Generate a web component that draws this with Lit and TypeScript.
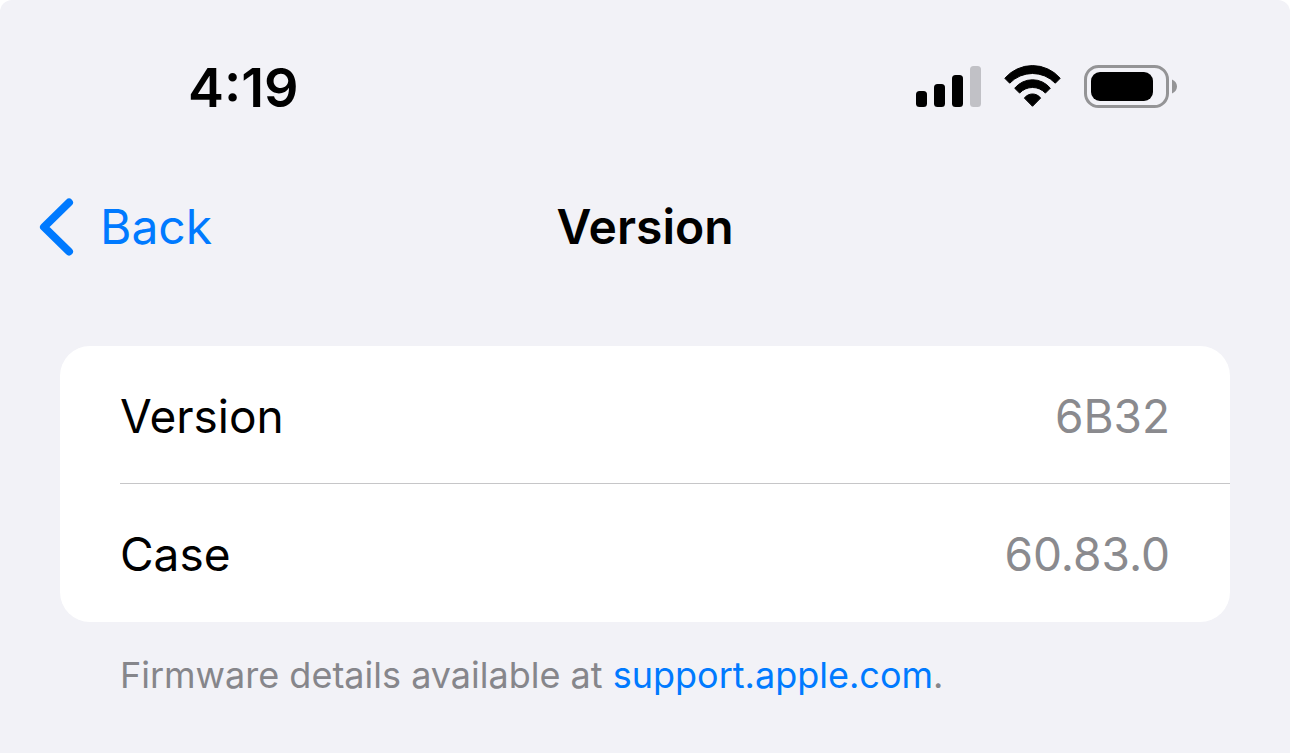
import { LitElement, html, css } from "lit";
import { customElement, state } from "lit/decorators.js";

interface Row {
  label: string;
  value: string;
}

@customElement("status-bar")
class StatusBar extends LitElement {
  static styles = css`
    :host {
      display: flex;
      align-items: center;
      justify-content: space-between;
      padding: 56px 112px 0 188px;
    }
    .time {
      font-size: 54px;
      font-weight: 600;
      line-height: 64px;
    }
    .icons {
      display: flex;
      align-items: center;
      gap: 22px;
      padding-bottom: 2px;
    }
    svg {
      display: block;
    }
  `;

  render() {
    return html`
      <time class="time">4:19</time>
      <div class="icons">
        <svg width="66" height="42" viewBox="0 0 66 42" role="img" aria-label="Cellular signal">
          <rect x="0" y="25" width="11" height="16" rx="3.500" />
          <rect x="18" y="18" width="11" height="23" rx="3.500" />
          <rect x="36" y="9" width="11" height="32" rx="3.500" />
          <rect x="54" y="0" width="11" height="41" rx="3.500" fill="#c1c1c6" />
        </svg>
        <svg width="58" height="44" viewBox="0 0 58 44" role="img" aria-label="Wi-Fi" stroke="#000" stroke-linejoin="round">
          <path d="M.8 13.300A36.500 36.500 0 0 1 56.200 13.300L51.300 18.200A31.600 31.600 0 0 0 5.700 18.200Z" />
          <path d="M10.700 23.200A23 23 0 0 1 46.300 23.200L41.400 28.100A17.600 17.600 0 0 0 15.600 28.100Z" />
          <path d="M20.400 33.100A10 10 0 0 1 36.600 33.100L28.500 41.300Z" />
        </svg>
        <svg width="94" height="44" viewBox="0 0 94 44" role="img" aria-label="Battery">
          <rect x="1.500" y="1.500" width="82" height="40" rx="13" fill="none" stroke="#949496" stroke-width="3" />
          <rect x="7" y="7" width="62" height="29" rx="9" />
          <path d="M88 14.500c3 1.200 5 3.900 5 7s-2 5.800-5 7z" fill="#949496" />
        </svg>
      </div>
    `;
  }
}

@customElement("nav-bar")
class NavBar extends LitElement {
  static styles = css`
    :host {
      display: grid;
      grid-template-columns: 1fr auto 1fr;
      align-items: center;
      padding: 76px 38px 0;
    }
    .back {
      display: flex;
      align-items: center;
      justify-self: start;
      gap: 26px;
      padding: 0;
      border: 0;
      background: none;
      color: #007aff;
      font: inherit;
      font-size: 48px;
      line-height: 62px;
      cursor: pointer;
    }
    .title {
      margin: 0;
      font-size: 48px;
      font-weight: 600;
      line-height: 62px;
    }
  `;

  render() {
    return html`
      <button class="back" type="button">
        <svg width="36" height="60" viewBox="0 0 36 60" aria-hidden="true">
          <path d="M31 5.500L6 30l25 24.500" fill="none" stroke="currentColor" stroke-width="8" stroke-linecap="round" stroke-linejoin="round" />
        </svg>
        Back
      </button>
      <h1 class="title">Version</h1>
    `;
  }
}

@customElement("app-root")
class AppRoot extends LitElement {
  @state() private rows: Row[] = [
    { label: "Version", value: "6B32" },
    { label: "Case", value: "60.83.0" },
  ];

  static styles = css`
    :host {
      display: block;
      background: #fff;
      color: #000;
      font-family: Inter, "Liberation Sans", sans-serif;
    }
    .screen {
      min-height: 100vh;
      box-sizing: border-box;
      border-radius: 12px 12px 0 0;
      background: #f2f2f7;
    }
    .content {
      padding: 88px 60px 48px;
    }
    .card {
      margin: 0;
      padding-left: 60px;
      border-radius: 30px;
      background: #fff;
    }
    .row {
      display: flex;
      align-items: center;
      justify-content: space-between;
      height: 138px;
      box-sizing: border-box;
      padding: 2px 60px 0 0;
      font-size: 46px;
      line-height: 60px;
    }
    .row:not(:last-child) {
      border-bottom: 1px solid #c6c6c8;
    }
    .value {
      margin: 0;
      color: #8a8a8e;
    }
    .note {
      margin: 30px 60px 0;
      color: #86868b;
      font-size: 36px;
      line-height: 46px;
    }
    a {
      color: #007aff;
      text-decoration: none;
    }
  `;

  render() {
    return html`
      <div class="screen">
        <status-bar></status-bar>
        <nav-bar></nav-bar>
        <main class="content">
          <dl class="card">
            ${this.rows.map(
              (row) => html`<div class="row">
                <dt>${row.label}</dt>
                <dd class="value">${row.value}</dd>
              </div>`
            )}
          </dl>
          <p class="note">Firmware details available at <a href="https://support.apple.com">support.apple.com</a>.</p>
        </main>
      </div>
    `;
  }
}
